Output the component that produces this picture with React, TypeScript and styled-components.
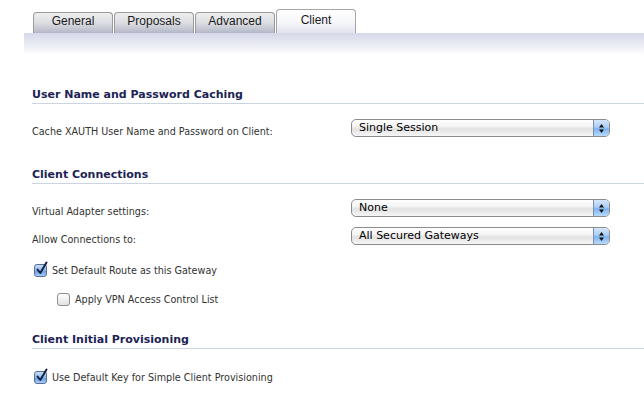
import React, { FC } from "react";
import styled, { createGlobalStyle } from "styled-components";

const Global = createGlobalStyle`
  html, body {
    margin: 0;
    padding: 0;
    background: #ffffff;
  }
  body {
    font-family: "DejaVu Sans", Verdana, sans-serif;
  }
`;

const Page = styled.div`
  width: 644px;
  height: 411px;
  overflow: hidden;
  background: #ffffff;
`;

const TabBar = styled.div`
  display: flex;
  align-items: flex-end;
  height: 33px;
  padding-left: 33px;
  gap: 1px;
  box-sizing: border-box;
`;

const Tab = styled.div<{ $active?: boolean }>`
  width: 80px;
  height: ${(p) => (p.$active ? 24 : 21)}px;
  box-sizing: border-box;
  border: 1px solid ${(p) => (p.$active ? "#a6a6a6" : "#9a9a9a")};
  border-bottom: none;
  border-radius: 4px 4px 0 0;
  background: ${(p) =>
    p.$active
      ? "linear-gradient(to bottom, #ffffff 0%, #f4f5f9 60%, #e1e3ee 100%)"
      : "linear-gradient(to bottom, #eeeeee 0%, #dcdde2 50%, #b4b7c8 100%)"};
  font-family: "Liberation Sans", Arial, sans-serif;
  font-size: 12px;
  color: #1a1a1a;
  text-align: center;
  line-height: ${(p) => (p.$active ? 20 : 17)}px;
`;

const Band = styled.div`
  margin-left: 24px;
  height: 22px;
  background: linear-gradient(to bottom, #d5d8e8 0%, #e6e8f1 45%, #ffffff 100%);
`;

const Content = styled.div`
  padding-left: 32px;
`;

const Heading = styled.div<{ $top: number }>`
  margin-top: ${(p) => p.$top}px;
  font-size: 11px;
  font-weight: bold;
  color: #1c2355;
  line-height: 14px;
  padding-bottom: 1px;
  border-bottom: 1px solid #c9d6e2;
`;

const FieldRow = styled.div<{ $top: number }>`
  display: flex;
  align-items: flex-start;
  margin-top: ${(p) => p.$top}px;
  height: 18px;
`;

const Label = styled.div`
  width: 319px;
  font-family: "DejaVu Sans Condensed", "DejaVu Sans", Verdana, sans-serif;
  font-size: 10.7px;
  color: #333333;
  padding-top: 6px;
  line-height: 13px;
`;

const SelectBox = styled.div`
  width: 259px;
  height: 18px;
  box-sizing: border-box;
  border: 1px solid #8c8c8c;
  border-radius: 5px;
  background: linear-gradient(
    to bottom,
    #ffffff 0%,
    #f4f4f4 40%,
    #e2e2e2 55%,
    #f6f6f6 100%
  );
  overflow: hidden;
  display: flex;
  align-items: center;
`;

const SelectValue = styled.span`
  flex: 1;
  padding-left: 7px;
  font-size: 11px;
  color: #000000;
  line-height: 16px;
`;

const Arrows = styled.span`
  width: 15px;
  height: 100%;
  border-left: 1px solid #7d8fb0;
  background: linear-gradient(
    to bottom,
    #d5e6fb 0%,
    #a9cdf6 45%,
    #7fb3ee 55%,
    #b7dafb 100%
  );
  display: flex;
  align-items: center;
  justify-content: center;
`;

const CheckRow = styled.div<{ $top: number; $indent?: number }>`
  display: flex;
  align-items: center;
  margin-top: ${(p) => p.$top}px;
  padding-left: ${(p) => 2 + (p.$indent || 0)}px;
  height: 13px;
`;

const Box = styled.span<{ $checked?: boolean }>`
  position: relative;
  width: 13px;
  height: 13px;
  box-sizing: border-box;
  border: 1px solid ${(p) => (p.$checked ? "#5a6f96" : "#8e8e8e")};
  border-radius: 3px;
  background: ${(p) =>
    p.$checked
      ? "linear-gradient(to bottom, #c9def8 0%, #8fb8ef 50%, #6c9fe6 60%, #a9cdf6 100%)"
      : "linear-gradient(to bottom, #ffffff 0%, #f0f0f0 50%, #e2e2e2 100%)"};
  margin-right: 5px;
  flex: none;
`;

const Tick = styled.svg`
  position: absolute;
  left: 0px;
  top: -4px;
`;

const CheckText = styled.span`
  font-family: "DejaVu Sans Condensed", "DejaVu Sans", Verdana, sans-serif;
  font-size: 10.7px;
  color: #333333;
  line-height: 13px;
`;

const Select: FC<{ value: string }> = ({ value }) => (
  <SelectBox>
    <SelectValue>{value}</SelectValue>
    <Arrows>
      <svg width="7" height="11" viewBox="0 0 7 11">
        <path d="M3.5 1 L6 4.5 L1 4.5 Z" fill="#111" />
        <path d="M3.5 10 L6 6.5 L1 6.5 Z" fill="#111" />
      </svg>
    </Arrows>
  </SelectBox>
);

const Check: FC<{ checked?: boolean; label: string; top: number; indent?: number }> = ({
  checked,
  label,
  top,
  indent,
}) => (
  <CheckRow $top={top} $indent={indent}>
    <Box $checked={checked}>
      {checked && (
        <Tick width="13" height="15" viewBox="0 0 13 15">
          <path
            d="M2.5 8.5 L5.3 12 L11.5 1.5"
            stroke="#14213f"
            strokeWidth="2"
            fill="none"
            strokeLinecap="round"
            strokeLinejoin="round"
          />
        </Tick>
      )}
    </Box>
    <CheckText>{label}</CheckText>
  </CheckRow>
);

const tabs = ["General", "Proposals", "Advanced", "Client"];

const App: FC = () => (
  <Page>
    <Global />
    <TabBar>
      {tabs.map((t) => (
        <Tab key={t} $active={t === "Client"}>
          {t}
        </Tab>
      ))}
    </TabBar>
    <Band />
    <Content>
      <Heading $top={33}>User Name and Password Caching</Heading>
      <FieldRow $top={15}>
        <Label>Cache XAUTH User Name and Password on Client:</Label>
        <Select value="Single Session" />
      </FieldRow>

      <Heading $top={31}>Client Connections</Heading>
      <FieldRow $top={15}>
        <Label>Virtual Adapter settings:</Label>
        <Select value="None" />
      </FieldRow>
      <FieldRow $top={10}>
        <Label>Allow Connections to:</Label>
        <Select value="All Secured Gateways" />
      </FieldRow>
      <Check checked top={19} label="Set Default Route as this Gateway" />
      <Check top={16} indent={23} label="Apply VPN Access Control List" />

      <Heading $top={27}>Client Initial Provisioning</Heading>
      <Check checked top={22} label="Use Default Key for Simple Client Provisioning" />
    </Content>
  </Page>
);

export default App;
